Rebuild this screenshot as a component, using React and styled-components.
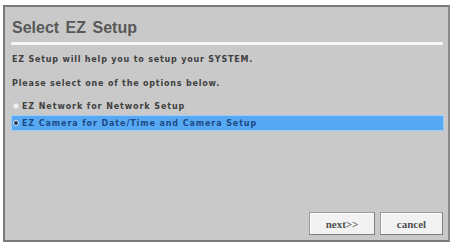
import React, { useState } from 'react';
import styled, { createGlobalStyle } from 'styled-components';

const GlobalStyle = createGlobalStyle`
    html, body {
        margin: 0;
        padding: 0;
        background: #ffffff;
        width: 453px;
        height: 243px;
        overflow: hidden;
    }
`;

const Page = styled.div`
    width: 453px;
    height: 243px;
    padding: 5px 3px 1px 3px;
    box-sizing: border-box;
    display: flex;
`;

const Dialog = styled.div`
    flex: 1;
    display: flex;
    flex-direction: column;
    background: #c9c9c9;
    border: 2px solid #7a7a7a;
    border-right-color: #8a8a8a;
    box-sizing: border-box;
    padding: 12px 4px 5px 6px;
    font-family: "DejaVu Sans", Verdana, sans-serif;
`;

const Title = styled.div`
    font-family: "Liberation Sans", Arial, sans-serif;
    font-size: 16px;
    font-weight: bold;
    color: #595959;
    padding-left: 1px;
    word-spacing: 2px;
    line-height: 18px;
`;

const Rule = styled.div`
    height: 3px;
    background: #f7f7f7;
    margin: 5px 1px 0 0;
    border-radius: 1px;
`;

const Text = styled.div`
    font-size: 8px;
    font-weight: bold;
    color: #404040;
    padding-left: 1px;
    letter-spacing: 0.8px;
    line-height: 10px;
    margin-top: ${({ $top }) => $top}px;
`;

const Options = styled.div`
    display: flex;
    flex-direction: column;
    margin-top: 9px;
`;

const Option = styled.div`
    display: flex;
    align-items: center;
    gap: 3px;
    height: 14px;
    margin-top: ${({ $top }) => $top || 0}px;
    padding-left: 1px;
    background: ${({ $active }) => ($active ? '#58a9f4' : 'transparent')};
    border: 1px solid ${({ $active }) => ($active ? '#9ccbf5' : 'transparent')};
    font-size: 8px;
    font-weight: bold;
    letter-spacing: 0.9px;
    color: ${({ $active }) => ($active ? '#1c4a84' : '#404040')};
`;

const Dot = styled.span`
    width: 4px;
    height: 4px;
    border-radius: 50%;
    background: ${({ $active }) => ($active ? '#1c3a60' : '#f4f4f4')};
    border: 1px solid ${({ $active }) => ($active ? '#e6f0fb' : '#dcdcdc')};
    flex: none;
`;

const Spacer = styled.div`
    flex: 1;
`;

const Buttons = styled.div`
    display: flex;
    justify-content: flex-end;
    gap: 5px;
    padding-right: 1px;
`;

const Button = styled.button`
    width: ${({ $w }) => $w}px;
    height: 23px;
    background: #f2f2f2;
    border: 1px solid #9a9a9a;
    border-right-color: #7e7e7e;
    border-bottom-color: #7e7e7e;
    box-shadow: inset 1px 1px 0 #ffffff;
    font-family: "Liberation Serif", "Times New Roman", serif;
    font-size: 11px;
    font-weight: bold;
    color: #505050;
    padding: 0;
    cursor: pointer;
`;

const App = () => {
    const [selected, setSelected] = useState(1);
    const options = ['EZ Network for Network Setup', 'EZ Camera for Date/Time and Camera Setup'];
    return (
        <Page>
            <GlobalStyle />
            <Dialog>
                <Title>Select EZ Setup</Title>
                <Rule />
                <Text $top={10}>EZ Setup will help you to setup your SYSTEM.</Text>
                <Text $top={14}>Please select one of the options below.</Text>
                <Options>
                    {options.map((label, i) => (
                        <Option key={label} $active={selected === i} $top={i ? 1 : 0} onClick={() => setSelected(i)}>
                            <Dot $active={selected === i} />
                            {label}
                        </Option>
                    ))}
                </Options>
                <Spacer />
                <Buttons>
                    <Button $w={66}>next&gt;&gt;</Button>
                    <Button $w={63}>cancel</Button>
                </Buttons>
            </Dialog>
        </Page>
    );
};

export default App;
